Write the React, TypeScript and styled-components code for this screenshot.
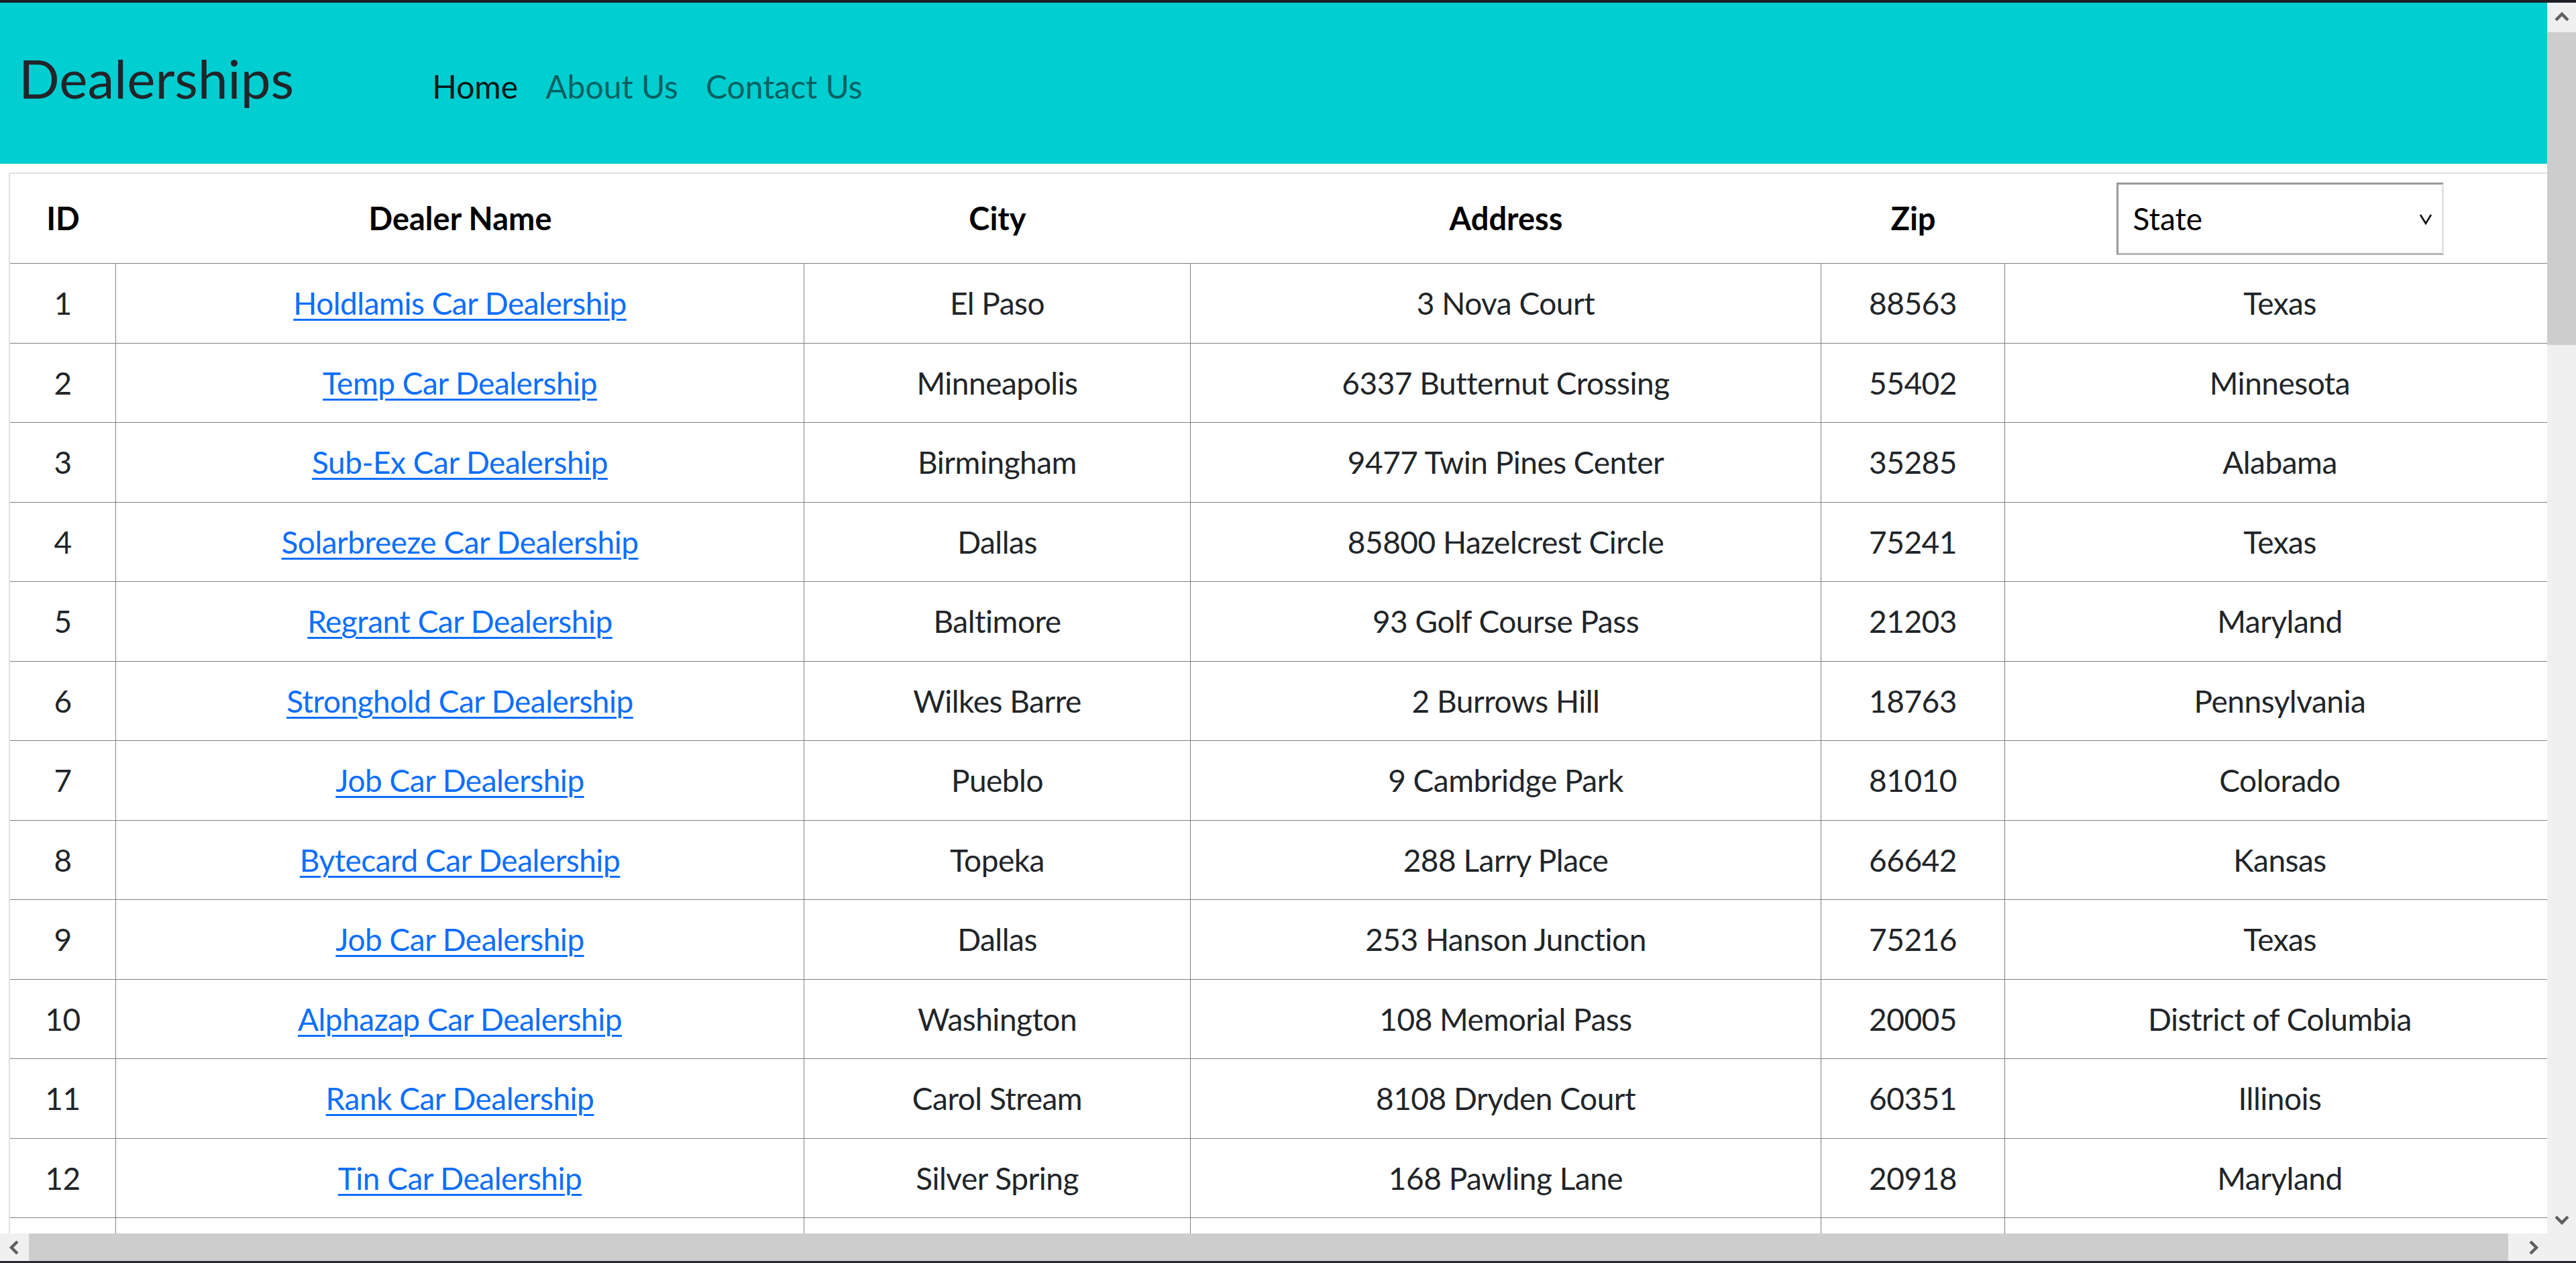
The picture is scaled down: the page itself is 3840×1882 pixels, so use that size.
import React from "react";
import styled, { createGlobalStyle } from "styled-components";

const GlobalStyle = createGlobalStyle`
  html, body {
    margin: 0;
    padding: 0;
    overflow: hidden;
    background: #ffffff;
  }
  body {
    font-family: Lato, "Noto Sans", "Liberation Sans", sans-serif;
    color: #212529;
  }
`;

const Frame = styled.div`
  display: grid;
  grid-template-columns: 1fr 43px;
  grid-template-rows: 4px 1fr 41px 3px;
  width: 100vw;
  height: 100vh;
`;

const TopEdge = styled.div`
  grid-column: 1 / -1;
  grid-row: 1;
  background: #1f1e24;
`;

const BottomEdge = styled.div`
  grid-column: 1 / -1;
  grid-row: 4;
  background: #2a2a2e;
`;

const Viewport = styled.main`
  grid-column: 1;
  grid-row: 2;
  overflow: hidden;
  background: #ffffff;
`;

const VScroll = styled.div`
  grid-column: 2;
  grid-row: 2;
  display: flex;
  flex-direction: column;
  background: #f0f0f0;
`;

const HScroll = styled.div`
  grid-column: 1;
  grid-row: 3;
  display: flex;
  background: #f0f0f0;
`;

const Corner = styled.div`
  grid-column: 2;
  grid-row: 3;
  background: #f0f0f0;
`;

const ScrollButton = styled.div<{ $w: number; $h: number }>`
  flex: none;
  width: ${(p) => p.$w}px;
  height: ${(p) => p.$h}px;
  display: flex;
  align-items: center;
  justify-content: center;
  background: #f0f0f0;
`;

const VThumb = styled.div`
  flex: none;
  height: 466px;
  background: #cdcdcd;
`;

const HThumb = styled.div`
  flex: none;
  width: 3696px;
  background: #cdcdcd;
`;

const Track = styled.div`
  flex: 1;
  background: #f0f0f0;
`;

const Navbar = styled.nav`
  box-sizing: border-box;
  height: 240px;
  background: #00ced1;
  display: flex;
  align-items: baseline;
  padding: 64px 0 0 28px;
`;

const Brand = styled.a`
  font-size: 80px;
  line-height: 1.2;
  color: #212529;
  text-decoration: none;
  white-space: nowrap;
`;

const NavList = styled.ul`
  display: flex;
  align-items: baseline;
  gap: 41px;
  list-style: none;
  margin: 0 0 0 206px;
  padding: 0;
`;

const NavLink = styled.a<{ $active?: boolean }>`
  font-size: 48px;
  line-height: 1.5;
  text-decoration: none;
  white-space: nowrap;
  color: ${(p) => (p.$active ? "rgba(0,0,0,0.9)" : "rgba(0,0,0,0.55)")};
`;

const TableArea = styled.section`
  padding: 13px 0 0 13px;
`;

const Table = styled.table`
  table-layout: fixed;
  width: 3795px;
  border-collapse: separate;
  border-spacing: 0;
  border-top: 2px solid #dee2e6;
  border-left: 2px solid #dee2e6;
  font-size: 46px;
  color: #212529;
`;

const Col = styled.col<{ $w: number }>`
  width: ${(p) => p.$w}px;
`;

const HeadCell = styled.th`
  height: 133px;
  padding: 0;
  font-size: 47px;
  font-weight: 700;
  text-align: center;
  vertical-align: middle;
  line-height: 1.5;
  color: #000;
  border-bottom: 1px solid #808080;
`;

const Cell = styled.td`
  height: 117.5px;
  padding: 0;
  text-align: center;
  vertical-align: middle;
  line-height: 1.5;
  letter-spacing: -0.5px;
  white-space: nowrap;
  border-bottom: 1px solid #808080;
  &:not(:last-child) {
    border-right: 1px solid #808080;
  }
`;

const DealerLink = styled.a`
  color: #0d6efd;
  text-decoration: underline;
  text-decoration-thickness: 3px;
  text-underline-offset: 6px;
`;

const SelectWrap = styled.div`
  position: relative;
  width: 488px;
  height: 108px;
  margin: 0 auto;
`;

const StateSelect = styled.select`
  appearance: none;
  -webkit-appearance: none;
  box-sizing: border-box;
  width: 100%;
  height: 100%;
  margin: 0;
  padding: 0 0 0 22px;
  font-family: Lato, "Noto Sans", sans-serif;
  font-size: 46px;
  color: #000;
  background: #ffffff;
  border-style: solid;
  border-width: 3px;
  border-color: #999999 #e3e3e3 #b5b5b5 #999999;
  border-radius: 0;
  outline: none;
`;

const SelectChevron = styled.svg`
  position: absolute;
  right: 16px;
  top: 43px;
  pointer-events: none;
`;

type Dealer = {
  id: number;
  name: string;
  city: string;
  address: string;
  zip: string;
  state: string;
};

const dealers: Dealer[] = [
  { id: 1, name: "Holdlamis Car Dealership", city: "El Paso", address: "3 Nova Court", zip: "88563", state: "Texas" },
  { id: 2, name: "Temp Car Dealership", city: "Minneapolis", address: "6337 Butternut Crossing", zip: "55402", state: "Minnesota" },
  { id: 3, name: "Sub-Ex Car Dealership", city: "Birmingham", address: "9477 Twin Pines Center", zip: "35285", state: "Alabama" },
  { id: 4, name: "Solarbreeze Car Dealership", city: "Dallas", address: "85800 Hazelcrest Circle", zip: "75241", state: "Texas" },
  { id: 5, name: "Regrant Car Dealership", city: "Baltimore", address: "93 Golf Course Pass", zip: "21203", state: "Maryland" },
  { id: 6, name: "Stronghold Car Dealership", city: "Wilkes Barre", address: "2 Burrows Hill", zip: "18763", state: "Pennsylvania" },
  { id: 7, name: "Job Car Dealership", city: "Pueblo", address: "9 Cambridge Park", zip: "81010", state: "Colorado" },
  { id: 8, name: "Bytecard Car Dealership", city: "Topeka", address: "288 Larry Place", zip: "66642", state: "Kansas" },
  { id: 9, name: "Job Car Dealership", city: "Dallas", address: "253 Hanson Junction", zip: "75216", state: "Texas" },
  { id: 10, name: "Alphazap Car Dealership", city: "Washington", address: "108 Memorial Pass", zip: "20005", state: "District of Columbia" },
  { id: 11, name: "Rank Car Dealership", city: "Carol Stream", address: "8108 Dryden Court", zip: "60351", state: "Illinois" },
  { id: 12, name: "Tin Car Dealership", city: "Silver Spring", address: "168 Pawling Lane", zip: "20918", state: "Maryland" },
];

const colWidths = [158, 1026, 576, 940, 274, 819];

const Chevron = ({ dir }: { dir: "up" | "down" | "left" | "right" }) => {
  const paths: Record<string, string> = {
    up: "M2 15 L11 6 L20 15",
    down: "M2 6 L11 15 L20 6",
    left: "M15 2 L6 11 L15 20",
    right: "M6 2 L15 11 L6 20",
  };
  return (
    <svg width="22" height="22" viewBox="0 0 22 22">
      <path d={paths[dir]} fill="none" stroke="#606060" strokeWidth="4.5" strokeLinejoin="miter" />
    </svg>
  );
};

export default function App() {
  return (
    <>
      <GlobalStyle />
      <Frame>
        <TopEdge />
        <Viewport>
          <Navbar>
            <Brand href="#">Dealerships</Brand>
            <NavList>
              <li><NavLink $active href="#">Home</NavLink></li>
              <li><NavLink href="#">About Us</NavLink></li>
              <li><NavLink href="#">Contact Us</NavLink></li>
            </NavList>
          </Navbar>
          <TableArea>
            <Table>
              <colgroup>
                {colWidths.map((w, i) => (
                  <Col key={i} $w={w} />
                ))}
              </colgroup>
              <thead>
                <tr>
                  <HeadCell>ID</HeadCell>
                  <HeadCell>Dealer Name</HeadCell>
                  <HeadCell>City</HeadCell>
                  <HeadCell>Address</HeadCell>
                  <HeadCell>Zip</HeadCell>
                  <HeadCell>
                    <SelectWrap>
                      <StateSelect defaultValue="">
                        <option value="">State</option>
                        <option value="Texas">Texas</option>
                        <option value="Maryland">Maryland</option>
                      </StateSelect>
                      <SelectChevron width="22" height="22" viewBox="0 0 22 22">
                        <path d="M3 5 L11 18 L19 5" fill="none" stroke="#111" strokeWidth="2.6" />
                      </SelectChevron>
                    </SelectWrap>
                  </HeadCell>
                </tr>
              </thead>
              <tbody>
                {dealers.map((d) => (
                  <tr key={d.id}>
                    <Cell>{d.id}</Cell>
                    <Cell>
                      <DealerLink href={`/dealer/${d.id}`}>{d.name}</DealerLink>
                    </Cell>
                    <Cell>{d.city}</Cell>
                    <Cell>{d.address}</Cell>
                    <Cell>{d.zip}</Cell>
                    <Cell>{d.state}</Cell>
                  </tr>
                ))}
                <tr>
                  <Cell />
                  <Cell />
                  <Cell />
                  <Cell />
                  <Cell />
                  <Cell />
                </tr>
              </tbody>
            </Table>
          </TableArea>
        </Viewport>
        <VScroll>
          <ScrollButton $w={43} $h={44}>
            <Chevron dir="up" />
          </ScrollButton>
          <VThumb />
          <Track />
          <ScrollButton $w={43} $h={41}>
            <Chevron dir="down" />
          </ScrollButton>
        </VScroll>
        <HScroll>
          <ScrollButton $w={43} $h={41}>
            <Chevron dir="left" />
          </ScrollButton>
          <HThumb />
          <Track />
          <ScrollButton $w={41} $h={41}>
            <Chevron dir="right" />
          </ScrollButton>
        </HScroll>
        <Corner />
        <BottomEdge />
      </Frame>
    </>
  );
}
